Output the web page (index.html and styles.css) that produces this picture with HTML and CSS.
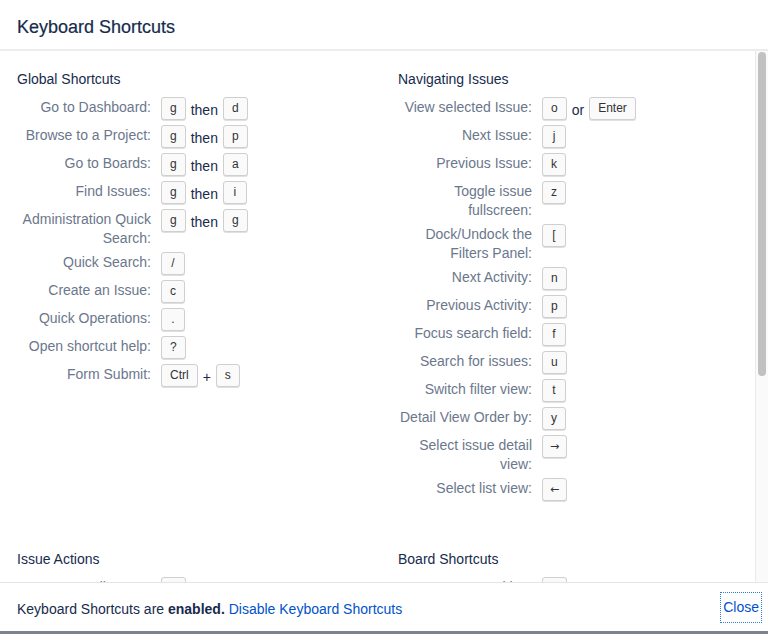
FILE: index.html
```html
<!DOCTYPE html>
<html lang="en">
<head>
<meta charset="utf-8">
<title>Keyboard Shortcuts</title>
<link rel="stylesheet" href="styles.css">
</head>
<body>
<div class="dialog">
  <header class="dialog-header">
    <h2 class="dialog-title">Keyboard Shortcuts</h2>
  </header>
  <main class="dialog-body">
    <div class="scroll">
      <div class="sections">
        <section class="section">
          <h3 class="section-title">Global Shortcuts</h3>
          <div class="row"><div class="label">Go to Dashboard:</div><div class="keys"><kbd class="key">g</kbd><span class="sep">then</span><kbd class="key">d</kbd></div></div>
          <div class="row"><div class="label">Browse to a Project:</div><div class="keys"><kbd class="key">g</kbd><span class="sep">then</span><kbd class="key">p</kbd></div></div>
          <div class="row"><div class="label">Go to Boards:</div><div class="keys"><kbd class="key">g</kbd><span class="sep">then</span><kbd class="key">a</kbd></div></div>
          <div class="row"><div class="label">Find Issues:</div><div class="keys"><kbd class="key">g</kbd><span class="sep">then</span><kbd class="key">i</kbd></div></div>
          <div class="row"><div class="label">Administration Quick Search:</div><div class="keys"><kbd class="key">g</kbd><span class="sep">then</span><kbd class="key">g</kbd></div></div>
          <div class="row"><div class="label">Quick Search:</div><div class="keys"><kbd class="key">/</kbd></div></div>
          <div class="row"><div class="label">Create an Issue:</div><div class="keys"><kbd class="key">c</kbd></div></div>
          <div class="row"><div class="label">Quick Operations:</div><div class="keys"><kbd class="key">.</kbd></div></div>
          <div class="row"><div class="label">Open shortcut help:</div><div class="keys"><kbd class="key">?</kbd></div></div>
          <div class="row"><div class="label">Form Submit:</div><div class="keys"><kbd class="key">Ctrl</kbd><span class="sep">+</span><kbd class="key">s</kbd></div></div>
        </section>
        <section class="section">
          <h3 class="section-title">Navigating Issues</h3>
          <div class="row"><div class="label">View selected Issue:</div><div class="keys"><kbd class="key">o</kbd><span class="sep">or</span><kbd class="key">Enter</kbd></div></div>
          <div class="row"><div class="label">Next Issue:</div><div class="keys"><kbd class="key">j</kbd></div></div>
          <div class="row"><div class="label">Previous Issue:</div><div class="keys"><kbd class="key">k</kbd></div></div>
          <div class="row"><div class="label">Toggle issue fullscreen:</div><div class="keys"><kbd class="key">z</kbd></div></div>
          <div class="row"><div class="label">Dock/Undock the Filters Panel:</div><div class="keys"><kbd class="key">[</kbd></div></div>
          <div class="row"><div class="label">Next Activity:</div><div class="keys"><kbd class="key">n</kbd></div></div>
          <div class="row"><div class="label">Previous Activity:</div><div class="keys"><kbd class="key">p</kbd></div></div>
          <div class="row"><div class="label">Focus search field:</div><div class="keys"><kbd class="key">f</kbd></div></div>
          <div class="row"><div class="label">Search for issues:</div><div class="keys"><kbd class="key">u</kbd></div></div>
          <div class="row"><div class="label">Switch filter view:</div><div class="keys"><kbd class="key">t</kbd></div></div>
          <div class="row"><div class="label">Detail View Order by:</div><div class="keys"><kbd class="key">y</kbd></div></div>
          <div class="row"><div class="label">Select issue detail view:</div><div class="keys"><kbd class="key arrow">&#8594;</kbd></div></div>
          <div class="row"><div class="label">Select list view:</div><div class="keys"><kbd class="key arrow">&#8592;</kbd></div></div>
        </section>
        <section class="section">
          <h3 class="section-title">Issue Actions</h3>
          <div class="row"><div class="label">Edit Issue:</div><div class="keys"><kbd class="key">e</kbd></div></div>
        </section>
        <section class="section">
          <h3 class="section-title">Board Shortcuts</h3>
          <div class="row"><div class="label">Backlog:</div><div class="keys"><kbd class="key">1</kbd></div></div>
        </section>
      </div>
    </div>
    <div class="scrollbar"><div class="thumb"></div></div>
  </main>
  <footer class="dialog-footer">
    <p class="footer-text">Keyboard Shortcuts are <strong>enabled.</strong> <a class="link" href="#">Disable Keyboard Shortcuts</a></p>
    <a class="close" href="#">Close</a>
  </footer>
</div>
<div class="backdrop-strip"></div>
</body>
</html>
```
FILE: styles.css
```css
* {
  box-sizing: border-box;
}

html, body {
  margin: 0;
  padding: 0;
}

body {
  width: 768px;
  height: 634px;
  overflow: hidden;
  background: #ffffff;
  font-family: "Liberation Sans", Arial, sans-serif;
  font-size: 14px;
  color: #172b4d;
}

.dialog {
  display: flex;
  flex-direction: column;
  height: 631px;
  background: #ffffff;
}

.dialog-header {
  height: 51px;
  flex: none;
  padding: 15px 17px 0;
  border-bottom: 2px solid #ebecf0;
}

.dialog-title {
  margin: 0;
  font-size: 18px;
  line-height: 24px;
  font-weight: normal;
  color: #172b4d;
  -webkit-text-stroke: 0.2px #172b4d;
}

.dialog-body {
  flex: none;
  height: 531px;
  display: flex;
  overflow: hidden;
}

.scroll {
  flex: 1;
  overflow: hidden;
}

.sections {
  display: grid;
  grid-template-columns: 381px 1fr;
  row-gap: 43px;
  padding: 18px 0 0 17px;
}

.section-title {
  margin: 0 0 8px;
  font-size: 14px;
  line-height: 20px;
  font-weight: normal;
  color: #172b4d;
}

.row {
  display: flex;
  align-items: flex-start;
  margin-bottom: 5px;
  min-height: 23px;
}

.label {
  width: 134px;
  flex: none;
  text-align: right;
  line-height: 19px;
  padding-top: 1px;
  margin-bottom: -1px;
  color: #6b778c;
}

.keys {
  display: flex;
  align-items: flex-start;
  margin-left: 10px;
}

.key {
  display: block;
  min-width: 24px;
  height: 23px;
  padding: 0 8px;
  border: 1px solid #cfcfcf;
  border-radius: 3px;
  background: #fafafa;
  box-shadow: 0 1px 0 rgba(0, 0, 0, 0.12);
  font-family: "Liberation Sans", Arial, sans-serif;
  font-size: 12px;
  line-height: 21px;
  text-align: center;
  color: #333333;
}

.key.arrow {
  font-family: "DejaVu Sans", sans-serif;
  font-size: 11px;
  padding: 0 7px;
}

.sep {
  margin: 4px 5px 0;
  line-height: 19px;
  color: #172b4d;
}

.scrollbar {
  flex: none;
  width: 13px;
  height: 531px;
  background: #fafafa;
  border-left: 1px solid #ebebeb;
  padding: 1px 0 0 2px;
}

.thumb {
  width: 8px;
  height: 324px;
  border-radius: 4px;
  background: #c1c1c1;
}

.dialog-footer {
  flex: none;
  height: 49px;
  border-top: 1px solid #e4e5e8;
  display: flex;
  align-items: center;
  justify-content: space-between;
  padding: 3px 7px 0 17px;
}

.footer-text {
  margin: 0;
  line-height: 20px;
  color: #172b4d;
}

.footer-text strong {
  font-weight: bold;
}

.link {
  color: #0052cc;
  text-decoration: none;
}

.close {
  display: block;
  padding: 6px 2px;
  line-height: 17px;
  color: #0052cc;
  text-decoration: none;
  outline: 1px dotted #2f7de1;
  margin-top: -2px;
}

.backdrop-strip {
  height: 3px;
  background: #7b8393;
}
```
